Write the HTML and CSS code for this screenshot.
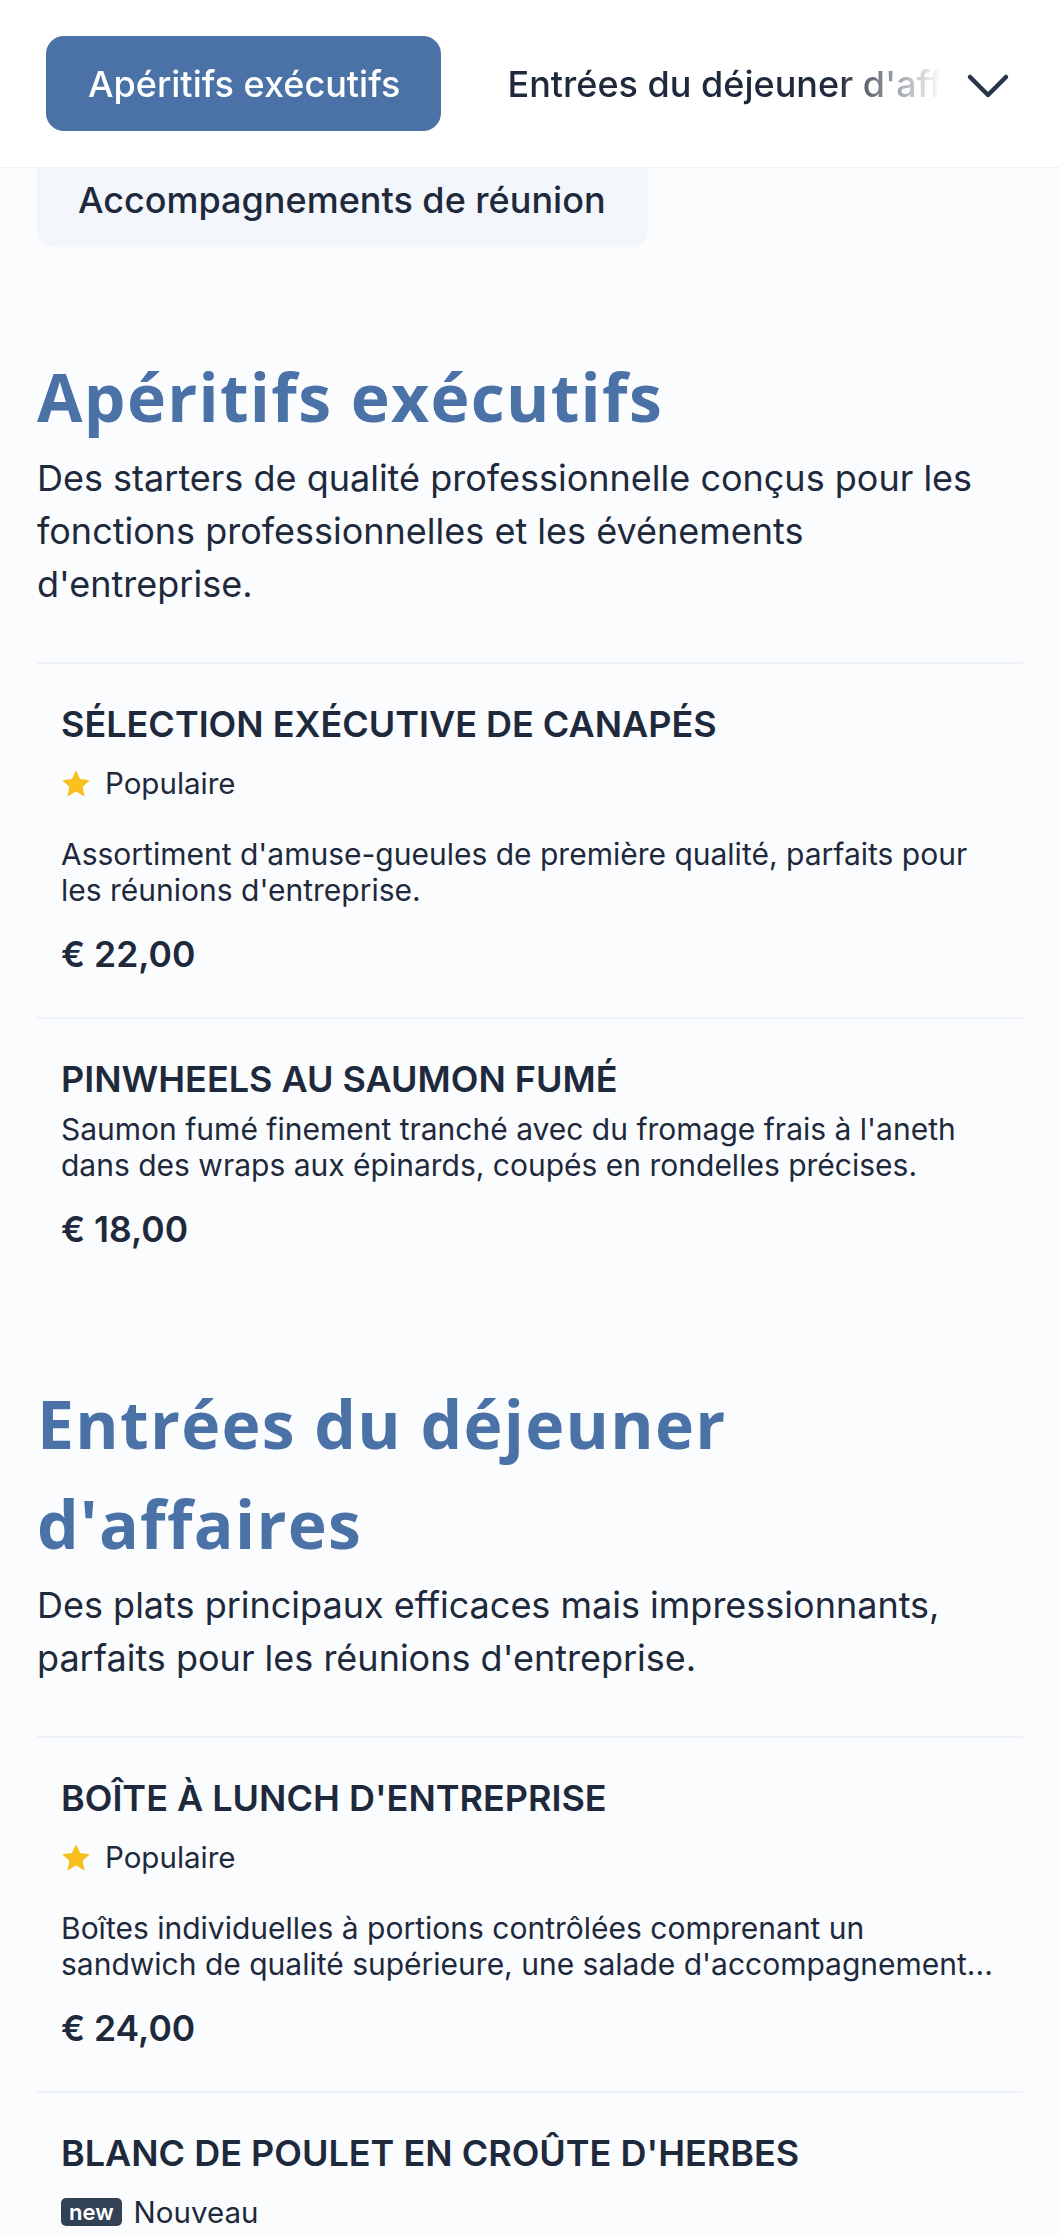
FILE: index.html
```html
<!DOCTYPE html>
<html lang="fr">
<head>
<meta charset="utf-8">
<title>Menu</title>
<link rel="stylesheet" href="styles.css">
</head>
<body>
<header class="topbar">
  <nav class="tabs">
    <a class="tab tab-active">Apéritifs exécutifs</a>
    <a class="tab">Entrées du déjeuner d'affaires</a>
  </nav>
  <button class="chevron" aria-label="Plus de catégories">
    <svg width="44" height="28" viewBox="0 0 44 28"><polyline points="4,5 22,23 40,5" fill="none" stroke="#283548" stroke-width="4.5" stroke-linecap="round" stroke-linejoin="round"/></svg>
  </button>
</header>
<div class="tabs-wrap">
  <a class="tab tab-muted">Accompagnements de réunion</a>
</div>

<main class="menu">
  <section class="section">
    <h2 class="section-title">Apéritifs exécutifs</h2>
    <p class="section-desc">Des starters de qualité professionnelle conçus pour les fonctions professionnelles et les événements d'entreprise.</p>
    <ul class="items">
      <li class="item">
        <h3 class="item-name">SÉLECTION EXÉCUTIVE DE CANAPÉS</h3>
        <div class="tags"><svg class="star" width="30" height="29" viewBox="0 0 24 23"><path d="M12 0.8l3.3 7.1 7.8 0.9-5.8 5.3 1.6 7.7L12 17.9l-6.9 3.9 1.6-7.7L0.9 8.8l7.8-0.9z" fill="#f8bf1f"/></svg><span class="tag-label">Populaire</span></div>
        <p class="item-desc">Assortiment d'amuse-gueules de première qualité, parfaits pour les réunions d'entreprise.</p>
        <div class="price">€ 22,00</div>
      </li>
      <li class="item">
        <h3 class="item-name">PINWHEELS AU SAUMON FUMÉ</h3>
        <p class="item-desc">Saumon fumé finement tranché avec du fromage frais à l'aneth dans des wraps aux épinards, coupés en rondelles précises.</p>
        <div class="price">€ 18,00</div>
      </li>
    </ul>
  </section>

  <section class="section">
    <h2 class="section-title">Entrées du déjeuner d'affaires</h2>
    <p class="section-desc">Des plats principaux efficaces mais impressionnants, parfaits pour les réunions d'entreprise.</p>
    <ul class="items">
      <li class="item">
        <h3 class="item-name">BOÎTE À LUNCH D'ENTREPRISE</h3>
        <div class="tags"><svg class="star" width="30" height="29" viewBox="0 0 24 23"><path d="M12 0.8l3.3 7.1 7.8 0.9-5.8 5.3 1.6 7.7L12 17.9l-6.9 3.9 1.6-7.7L0.9 8.8l7.8-0.9z" fill="#f8bf1f"/></svg><span class="tag-label">Populaire</span></div>
        <p class="item-desc">Boîtes individuelles à portions contrôlées comprenant un sandwich de qualité supérieure, une salade d'accompagnement...</p>
        <div class="price">€ 24,00</div>
      </li>
      <li class="item">
        <h3 class="item-name">BLANC DE POULET EN CROÛTE D'HERBES</h3>
        <div class="tags"><span class="badge-new">new</span><span class="tag-label">Nouveau</span></div>
        <p class="item-desc">Blanc de poulet tendre en croûte d'herbes fraîches, servi avec des légumes de saison rôtis.</p>
        <div class="price">€ 26,00</div>
      </li>
    </ul>
  </section>
</main>
</body>
</html>
```
FILE: styles.css
```css
* { box-sizing: border-box; }
html, body { margin: 0; padding: 0; }
body {
  background: #fbfcfe;
  color: #1e293b;
  font-family: Inter, "Liberation Sans", sans-serif;
  overflow: hidden;
}
.topbar {
  position: relative;
  z-index: 2;
  height: 168px;
  background: #ffffff;
  border-bottom: 1px solid #eef1f5;
  display: flex;
  align-items: flex-start;
  padding: 36px 0 0 46px;
}
.tabs {
  display: flex;
  gap: 24px;
  width: 900px;
  overflow: hidden;
  white-space: nowrap;
  -webkit-mask-image: linear-gradient(to right, #000 calc(100% - 110px), transparent calc(100% - 4px));
  mask-image: linear-gradient(to right, #000 calc(100% - 110px), transparent calc(100% - 4px));
}
.tab {
  display: inline-flex;
  align-items: center;
  flex: none;
  height: 95px;
  padding: 0 42px;
  border-radius: 18px;
  font-size: 36px;
  font-weight: 500;
  color: #1e293b;
  white-space: nowrap;
}
.tab-active {
  background: #4a72a6;
  color: #ffffff;
  padding: 0 41px 0 42px;
}
.chevron {
  margin: 36px 0 0 20px;
  padding: 0;
  border: 0;
  background: none;
  width: 44px;
  height: 28px;
  display: block;
}
.chevron svg { display: block; }
.tabs-wrap {
  position: relative;
  z-index: 1;
  margin-top: -16px;
  padding-left: 37px;
}
.tab.tab-muted {
  background: #f3f6fa;
  padding: 0 42px 0 41px;
  border-radius: 0 0 18px 18px;
}
.menu {
  padding: 99px 36px 40px 37px;
}
.section + .section { margin-top: 81px; }
.section-title {
  margin: 0;
  font-family: "Open Sans", "Liberation Sans", sans-serif;
  font-weight: 700;
  font-size: 66px;
  letter-spacing: 1.3px;
  line-height: 100px;
  color: #4a72a6;
}
.section-desc {
  margin: 6px 0 0;
  font-size: 36px;
  line-height: 53px;
  color: #1e293b;
}
.items {
  list-style: none;
  margin: 51px 0 0;
  padding: 0;
}
.item {
  border-top: 2px solid #eff2f6;
  padding: 39px 24px 40px;
}
.item-name {
  margin: 0;
  font-size: 36px;
  line-height: 42px;
  font-weight: 600;
  color: #1e293b;
}
.tags {
  display: flex;
  align-items: center;
  height: 36px;
  margin: 20px 0 35px;
  gap: 14px;
}
.star { display: block; flex: none; }
.tag-label {
  font-size: 29.5px;
  color: #1e293b;
}
.badge-new {
  background: #334155;
  color: #ffffff;
  font-size: 22px;
  font-weight: 600;
  border-radius: 5px;
  padding: 0 8px;
  height: 28px;
  line-height: 28px;
  margin-right: -2px;
}
.item-desc {
  margin: 11px 0 0;
  font-size: 30px;
  line-height: 36px;
  color: #1e293b;
}
.tags + .item-desc { margin-top: 0; }
.price {
  margin-top: 25px;
  font-size: 35.5px;
  line-height: 44px;
  font-weight: 600;
  color: #1e293b;
}
```
